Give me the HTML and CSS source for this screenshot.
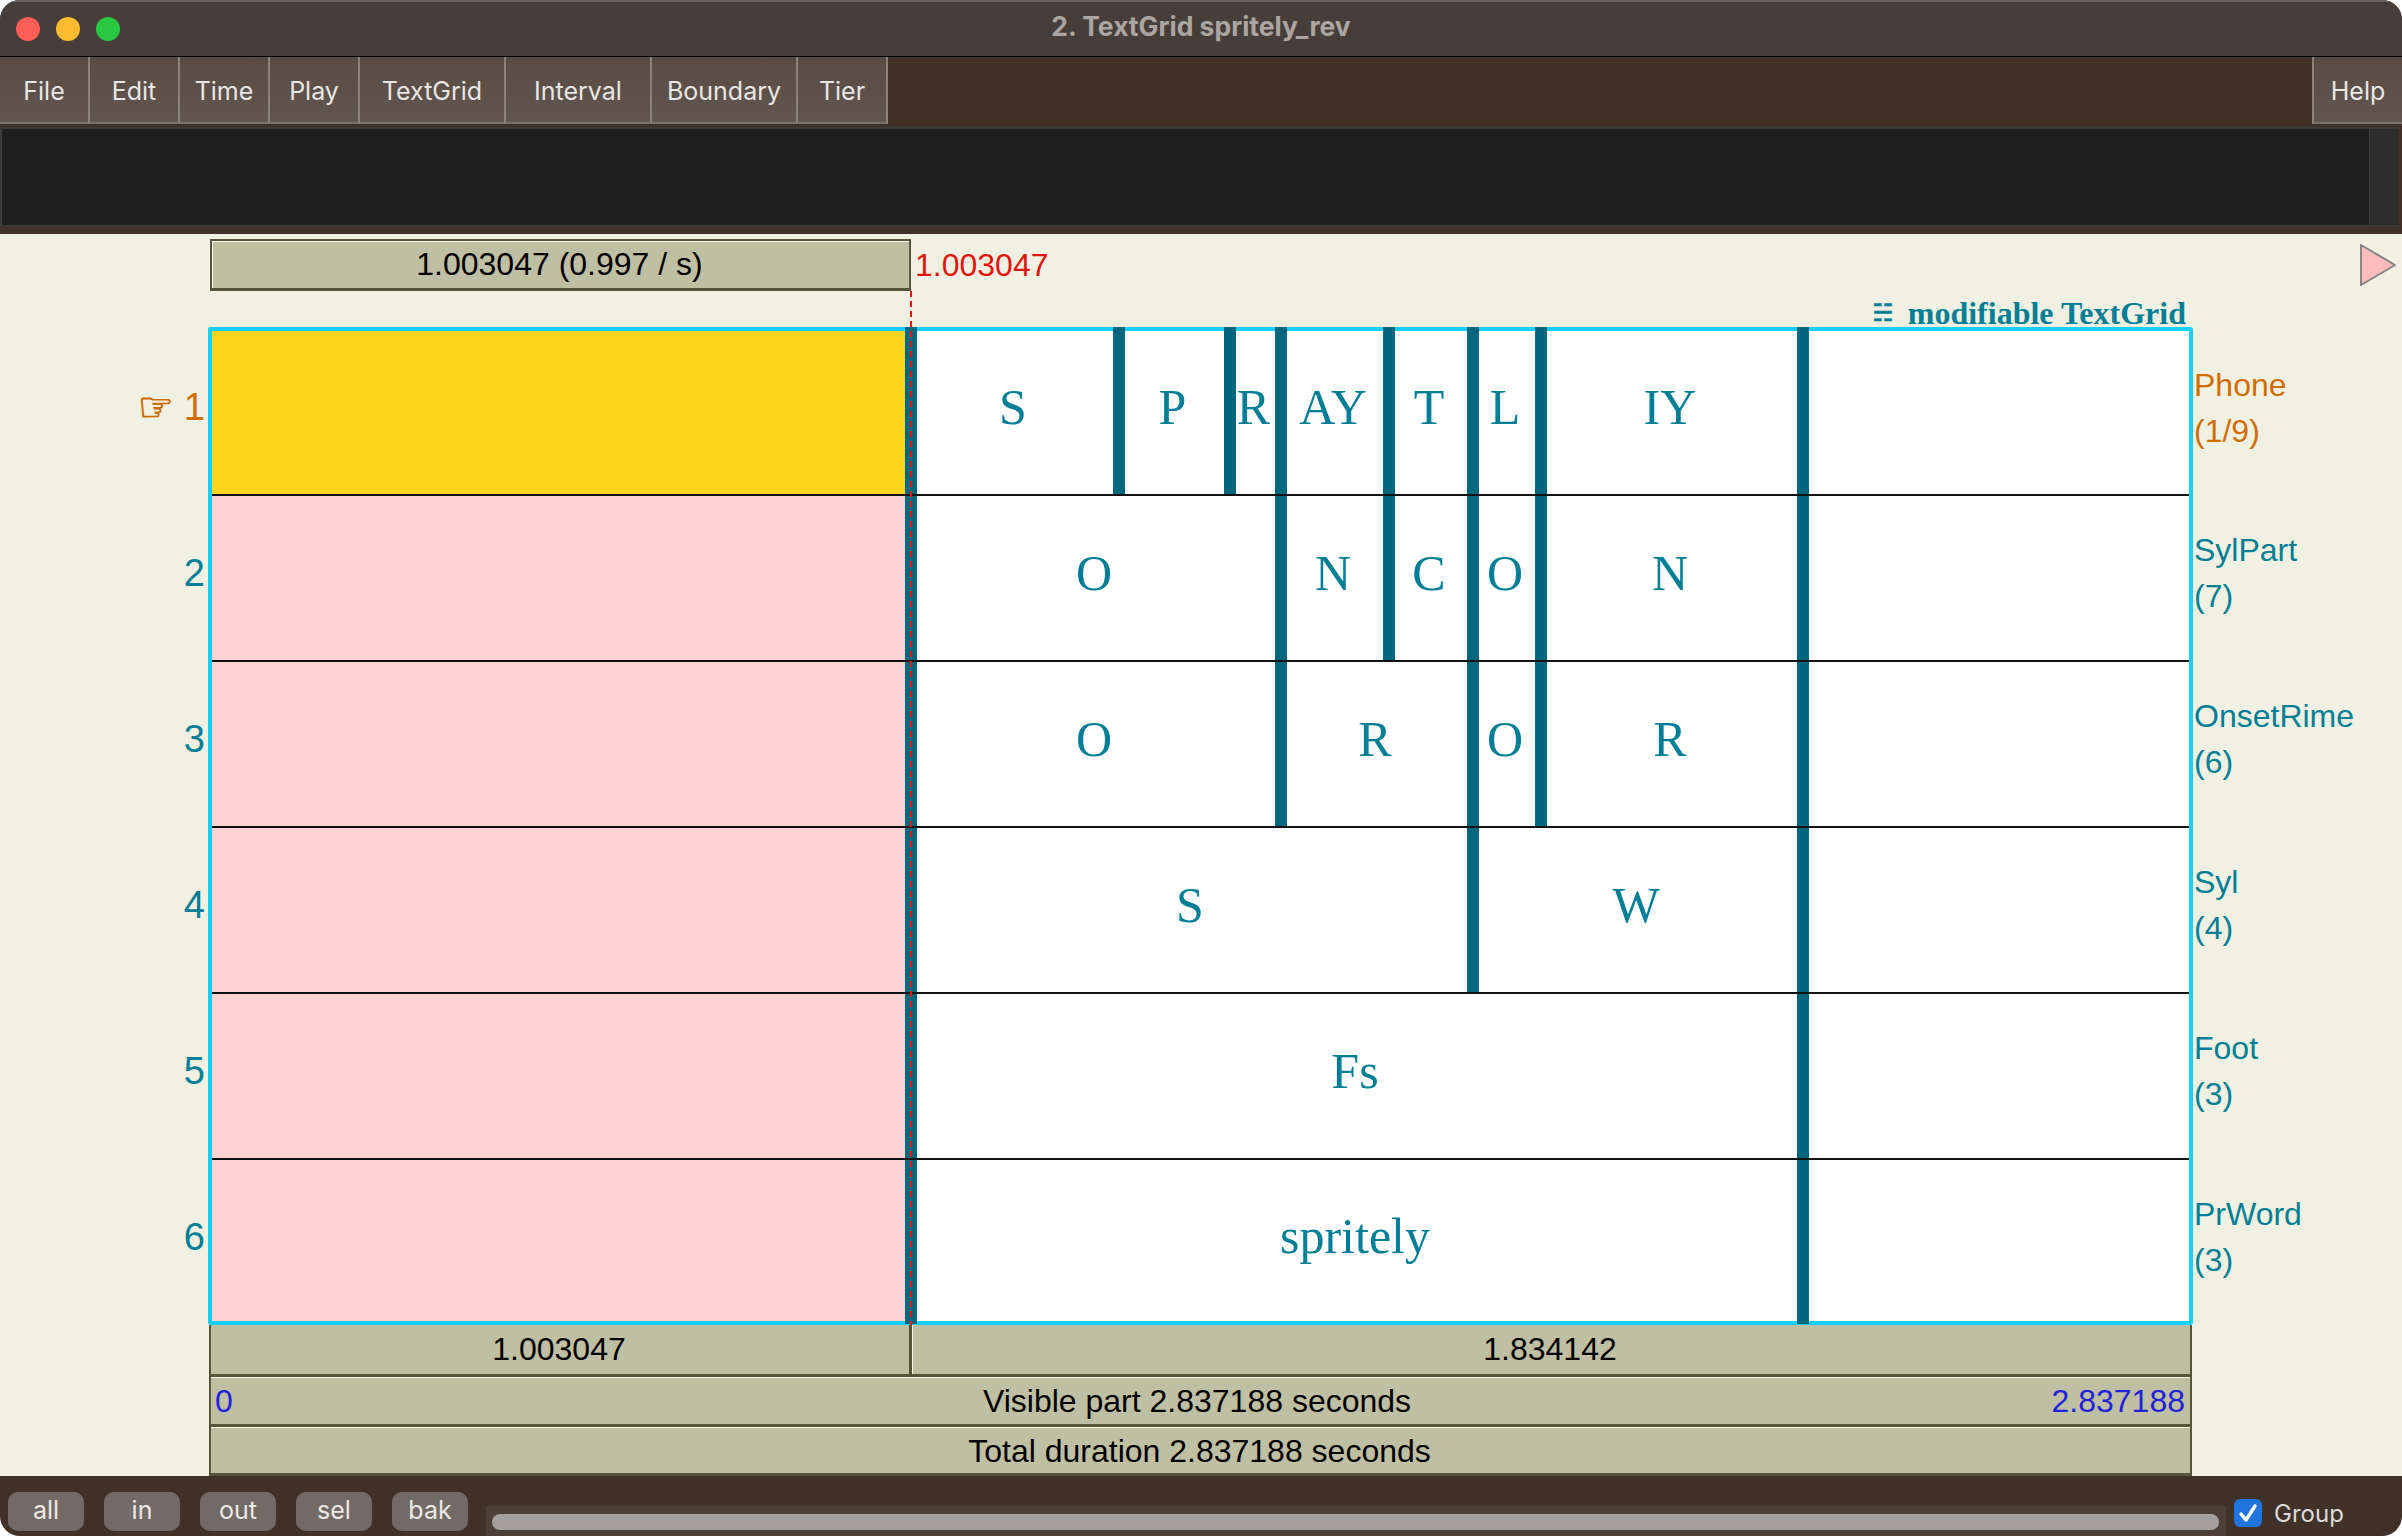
FILE: index.html

```html
<!DOCTYPE html>
<html lang="en">
<head>
  <meta charset="UTF-8">
  <title>2. TextGrid spritely_rev</title>
  <link rel="stylesheet" href="styles.css">
</head>
<body>
  <div class="window">
    <header class="titlebar">
      <div class="lights">
        <span class="light red"></span>
        <span class="light yellow"></span>
        <span class="light green"></span>
      </div>
      <div class="wintitle">2. TextGrid spritely_rev</div>
    </header>

    <nav class="menubar">
      <div class="menu m-file">File</div>
      <div class="menu m-std">Edit</div>
      <div class="menu m-std">Time</div>
      <div class="menu m-std">Play</div>
      <div class="menu m-wide">TextGrid</div>
      <div class="menu m-wide">Interval</div>
      <div class="menu m-wide">Boundary</div>
      <div class="menu m-std">Tier</div>
      <div class="menu m-help">Help</div>
    </nav>

    <div class="textpanel">
      <div class="textarea"></div>
      <div class="textscroll"></div>
    </div>

    <main class="canvas">
      <div class="cursor-row">
        <div class="bevel selbox">1.003047 (0.997 / s)</div>
        <div class="cursor-time">1.003047</div>
        <svg class="play" width="36" height="42" viewBox="0 0 36 42">
          <polygon points="1,1 35,21 1,41" fill="#ffbcbc" stroke="#858585" stroke-width="2"/>
        </svg>
      </div>
      <div class="mod-row"><span class="mod-icon">☵</span>modifiable TextGrid</div>

      <div class="main">
        <div class="nums">
          <div class="row num active"><span class="hand">☞</span>1</div>
          <div class="row num">2</div>
          <div class="row num">3</div>
          <div class="row num">4</div>
          <div class="row num">5</div>
          <div class="row num">6</div>
        </div>

        <div class="frame">
          <div class="row tier">
            <div class="cell current"></div><div class="b"></div>
            <div class="cell">S</div><div class="b"></div>
            <div class="cell">P</div><div class="b"></div>
            <div class="cell">R</div><div class="b"></div>
            <div class="cell">AY</div><div class="b"></div>
            <div class="cell">T</div><div class="b"></div>
            <div class="cell">L</div><div class="b"></div>
            <div class="cell">IY</div><div class="b"></div>
            <div class="cell"></div>
          </div>
          <div class="row tier">
            <div class="cell off"></div><div class="b"></div>
            <div class="cell span-5">O</div><div class="b"></div>
            <div class="cell">N</div><div class="b"></div>
            <div class="cell">C</div><div class="b"></div>
            <div class="cell">O</div><div class="b"></div>
            <div class="cell">N</div><div class="b"></div>
            <div class="cell"></div>
          </div>
          <div class="row tier">
            <div class="cell off"></div><div class="b"></div>
            <div class="cell span-5">O</div><div class="b"></div>
            <div class="cell span-3">R</div><div class="b"></div>
            <div class="cell">O</div><div class="b"></div>
            <div class="cell">R</div><div class="b"></div>
            <div class="cell"></div>
          </div>
          <div class="row tier">
            <div class="cell off"></div><div class="b"></div>
            <div class="cell span-9">S</div><div class="b"></div>
            <div class="cell span-3">W</div><div class="b"></div>
            <div class="cell"></div>
          </div>
          <div class="row tier">
            <div class="cell off"></div><div class="b"></div>
            <div class="cell span-13">Fs</div><div class="b"></div>
            <div class="cell"></div>
          </div>
          <div class="row tier">
            <div class="cell off"></div><div class="b"></div>
            <div class="cell span-13">spritely</div><div class="b"></div>
            <div class="cell"></div>
          </div>
        </div>

        <div class="names">
          <div class="row name active">Phone<br>(1/9)</div>
          <div class="row name">SylPart<br>(7)</div>
          <div class="row name">OnsetRime<br>(6)</div>
          <div class="row name">Syl<br>(4)</div>
          <div class="row name">Foot<br>(3)</div>
          <div class="row name">PrWord<br>(3)</div>
        </div>

        <div class="cursor-line"></div>
      </div>

      <div class="bars">
        <div class="bar split">
          <div class="seg seg-left">1.003047</div>
          <div class="seg seg-right">1.834142</div>
        </div>
        <div class="bar visible">
          <span class="blue">0</span>
          <span class="visible-label">Visible part 2.837188 seconds</span>
          <span class="blue end">2.837188</span>
        </div>
        <div class="bar total">Total duration 2.837188 seconds</div>
      </div>
    </main>

    <footer class="bottombar">
      <div class="zoombtn">all</div>
      <div class="zoombtn">in</div>
      <div class="zoombtn">out</div>
      <div class="zoombtn">sel</div>
      <div class="zoombtn">bak</div>
      <div class="track"><div class="thumb"></div></div>
      <div class="check">
        <svg width="28" height="28" viewBox="0 0 28 28">
          <rect width="28" height="28" rx="6" fill="#1f74dd"/>
          <path d="M7 15 L12 21 L21 7" fill="none" stroke="#fff" stroke-width="3.4" stroke-linecap="round" stroke-linejoin="round"/>
        </svg>
      </div>
      <div class="group">Group</div>
    </footer>
  </div>
</body>
</html>
```

FILE: styles.css

```css
html, body {
  margin: 0;
  background-color: #fff;
}
.window {
  width: 2402px;
  height: 1536px;
  display: flex;
  flex-direction: column;
  overflow: hidden;
  border-radius: 20px;
  background-color: #403129;
  font-family: "Liberation Sans", Arial, sans-serif;
  font-size: 32px;
}

/* title bar */
.titlebar {
  height: 57px;
  flex: none;
  box-sizing: border-box;
  display: flex;
  align-items: center;
  position: relative;
  background-color: #483e39;
  border-top: 2px solid #6b625d;
  border-bottom: 1px solid #000;
}
.lights {
  display: flex;
  gap: 16px;
  padding-left: 16px;
}
.light {
  width: 24px;
  height: 24px;
  border-radius: 50%;
}
.red { background-color: #ff5f57; }
.yellow { background-color: #febc2e; }
.green { background-color: #28c840; }
.wintitle {
  position: absolute;
  left: 0;
  right: 0;
  top: 8px;
  text-align: center;
  font-family: Inter, sans-serif;
  font-weight: 700;
  font-size: 26.5px;
  color: #aca5a0;
}

/* menus */
.menubar {
  height: 70px;
  flex: none;
  display: flex;
  align-items: flex-start;
}
.menu {
  height: 67px;
  box-sizing: border-box;
  display: flex;
  align-items: center;
  justify-content: center;
  padding-top: 2px;
  background: linear-gradient(#584c44, #61554f);
  border-right: 2px solid #8c827c;
  border-bottom: 2px solid #7b716b;
  font-family: Inter, sans-serif;
  font-size: 25px;
  color: #e9e6e3;
}
.m-file { width: 90px; }
.m-std { width: 90px; }
.m-wide { width: 146px; }
.m-help {
  width: 90px;
  margin-left: auto;
  border-left: 2px solid #8c827c;
  border-right: none;
}

/* text panel */
.textpanel {
  height: 100px;
  margin-bottom: 7px;
  flex: none;
  box-sizing: border-box;
  display: flex;
  padding-right: 3px;
}
.textarea {
  flex: 1;
  background-color: #1e1e1e;
  border: 2px solid #3a3a3a;
  border-right: none;
}
.textscroll {
  width: 29px;
  background-color: #2d2d2d;
  border: 2px solid #3a3a3a;
  border-width: 2px 0;
  border-left: 1px solid #3f3f3f;
}

/* drawing area */
.canvas {
  height: 1242px;
  flex: none;
  background-color: #f1f1e3;
  display: flex;
  flex-direction: column;
}
.cursor-row {
  height: 52px;
  margin-top: 5px;
  flex: none;
  display: flex;
  align-items: center;
  padding-left: 210px;
  padding-right: 6px;
}
.bevel {
  background-color: #bfbfa3;
  border: 2px solid #55553a;
  border-bottom-width: 3px;
  box-shadow: inset 0 1px #f7f7ea, inset 1px 0 #f7f7ea;
}
.selbox {
  width: 701px;
  height: 52px;
  box-sizing: border-box;
  display: flex;
  align-items: center;
  justify-content: center;
  padding-right: 2px;
  color: #000;
}
.cursor-time {
  margin-left: 4px;
  color: #e0160d;
}
.play {
  margin-left: auto;
}
.mod-row {
  height: 36px;
  flex: none;
  box-sizing: border-box;
  padding-right: 216px;
  display: flex;
  justify-content: flex-end;
  align-items: flex-end;
  font-family: "Liberation Serif", "Times New Roman", serif;
  font-weight: bold;
  font-size: 32px;
  line-height: 27px;
  color: #007e96;
}
.mod-icon {
  margin-right: 14px;
  font-family: "DejaVu Sans", sans-serif;
  font-weight: normal;
  font-size: 24px;
  -webkit-text-stroke: 0.5px #007e96;
}

.main {
  flex: none;
  height: 998px;
  display: flex;
  position: relative;
}
.nums {
  width: 208px;
  padding-top: 4px;
}
.names {
  padding-top: 4px;
  padding-left: 1px;
}
.row {
  height: 166px;
  box-sizing: border-box;
}
.row:first-child { height: 165px; }
.row:last-child { height: 161px; }

.num {
  display: flex;
  justify-content: flex-end;
  align-items: center;
  padding-right: 3px;
  padding-bottom: 12px;
  font-size: 38px;
  color: #007e96;
}
.num:first-child { padding-bottom: 13px; }
.num:last-child { padding-bottom: 7px; }
.num.active { color: #d06d00; }
.hand {
  margin-right: 10px;
  font-family: "DejaVu Sans", sans-serif;
  font-size: 40px;
  -webkit-text-stroke: 1px #d06d00;
}
.name {
  padding-top: 31px;
  line-height: 46px;
  color: #007e96;
}
.name.active { color: #d06d00; }

.frame {
  width: 1977px;
  height: 990px;
  border: 4px solid #14cfff;
  border-radius: 3px;
  flex: none;
  background-color: #fff;
}
.tier {
  display: grid;
  grid-template-columns: 693px 12px 196px 12px 99px 12px 39px 12px 96px 12px 72px 12px 56px 12px 250px 12px 380px;
  border-bottom: 2px solid #111;
}
.tier:last-child { border-bottom: none; }
.tier:first-child .b { margin-top: -4px; }
.tier:last-child .b { margin-bottom: -3px; }
.cell {
  display: flex;
  align-items: center;
  justify-content: center;
  padding-right: 4px;
  padding-bottom: 10px;
  font-family: "Liberation Serif", "Times New Roman", serif;
  font-size: 50px;
  color: #007e96;
  white-space: nowrap;
}
.tier:first-child .cell { padding-bottom: 12px; }
.cell.current { background-color: #ffd61e; }
.cell.off { background-color: #ffd2d3; }
.span-3 { grid-column: span 3; }
.span-5 { grid-column: span 5; }
.span-9 { grid-column: span 9; }
.span-13 { grid-column: span 13; }
.b { background-color: #00677f; }

.cursor-line {
  position: absolute;
  left: 910px;
  top: -36px;
  bottom: 0;
  width: 2px;
  background: repeating-linear-gradient(#e0160d 0 6px, transparent 6px 10px);
}

/* bars under the grid */
.bars {
  display: flex;
  flex-direction: column;
  padding-left: 209px;
  width: 1983px;
}
.bar {
  background-color: #bfbfa3;
  border-left: 2px solid #55553a;
  border-right: 2px solid #55553a;
  border-bottom: 3px solid #55553a;
  box-sizing: border-box;
  flex: none;
  display: flex;
  align-items: center;
  color: #000;
}
.split {
  height: 52px;
}
.seg {
  height: 100%;
  display: flex;
  align-items: center;
  justify-content: center;
  padding-right: 2px;
  box-sizing: border-box;
}
.seg-left {
  width: 701px;
  border-right: 3px solid #55553a;
}
.seg-right {
  flex: 1;
  box-shadow: inset 1px 0 #f7f7ea;
}
.visible {
  height: 50px;
  display: grid;
  grid-template-columns: 1fr auto 1fr;
  padding: 1px 5px 0 4px;
  box-shadow: inset 0 1px #f7f7ea;
}
.visible-label { margin-right: 6px; }
.total {
  height: 49px;
  justify-content: center;
  padding-top: 2px;
  padding-right: 2px;
  box-shadow: inset 0 1px #f7f7ea;
}
.blue { color: #2222dd; }
.end { text-align: right; }

/* bottom controls */
.bottombar {
  height: 60px;
  flex: none;
  display: flex;
  padding-left: 8px;
  font-family: Inter, sans-serif;
  font-size: 25px;
}
.zoombtn {
  width: 76px;
  height: 39px;
  margin-top: 16px;
  margin-right: 20px;
  padding-bottom: 4px;
  box-sizing: border-box;
  border-radius: 10px;
  background-color: #736a65;
  color: #ebe8e5;
  display: flex;
  align-items: center;
  justify-content: center;
}
.track {
  width: 1740px;
  height: 30px;
  margin-top: 30px;
  margin-left: -2px;
  box-sizing: border-box;
  padding: 8px 7px 0 6px;
  background-color: #4c3f38;
}
.thumb {
  height: 16px;
  border-radius: 8px;
  background-color: #a5a09c;
}
.check {
  margin-top: 23px;
  margin-left: 8px;
  height: 28px;
}
.group {
  margin-top: 20px;
  margin-left: 12px;
  line-height: 36px;
  font-size: 24px;
  color: #dedbd8;
}
```
